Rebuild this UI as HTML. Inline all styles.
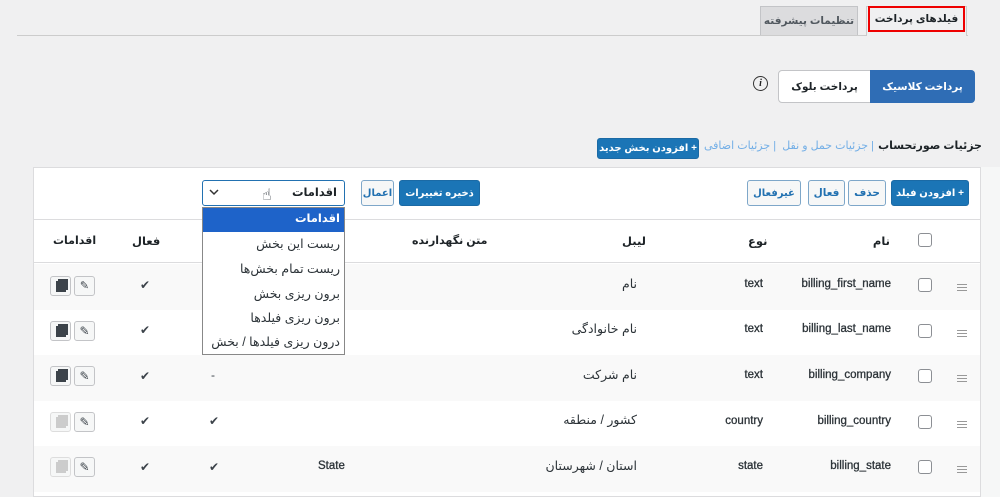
<!DOCTYPE html>
<html><head><meta charset="utf-8"><style>
*{box-sizing:border-box;margin:0;padding:0}
body{width:1000px;height:492px;overflow:hidden;background:#f0f0f1;font-family:"Liberation Sans","DejaVu Sans",sans-serif;font-size:12px;color:#3c434a;position:relative}
.a{position:absolute}
.t{position:absolute;white-space:nowrap;font-size:12px;direction:rtl}
.l{direction:ltr;font-weight:normal;font-size:11.5px;color:#2c3338;-webkit-text-stroke:0.3px #2c3338}
.btn{position:absolute;display:flex;align-items:center;justify-content:center;font-size:11px;font-weight:bold;border-radius:3px;white-space:nowrap;direction:rtl}
.bb{background:#1b75b6;color:#fff;border:1px solid #1b6aa5}
.bw{background:#f6f7f7;color:#2271b1;border:1px solid #7ea7c9}
.row{position:absolute;left:34px;width:946px;height:46px}
.cb{position:absolute;left:918px;width:14px;height:14px;border:1px solid #8c8f94;border-radius:3px;background:#fff}
.hm{position:absolute;left:957px;width:10px;height:7px;border-top:1px solid #999;border-bottom:1px solid #999}
.hm:after{content:"";position:absolute;left:0;right:0;top:2px;border-top:1px solid #999}
.ib{position:absolute;width:21px;height:20px;border:1px solid #c3c4c7;border-radius:3px;background:#f6f7f7}
.h{color:#1d2327;font-weight:bold;font-size:11.5px}
.p{color:#2c3338;font-size:12.5px}
</style></head><body>
<div class="a" style="left:17px;top:35px;width:951px;height:1px;background:#ccc"></div>
<div class="btn" style="left:760px;top:6px;width:98px;height:29px;background:#dcdcde;border:1px solid #c3c4c7;border-bottom:none;border-radius:0;color:#50575e;font-size:10.5px">تنظیمات پیشرفته</div>
<div class="a" style="left:866px;top:6px;width:101px;height:30px;background:#f0f0f1;border:1px solid #ccc;border-bottom:none"></div>
<div class="btn" style="left:868px;top:6px;width:97px;height:26px;border:2px solid #e00;border-radius:0;color:#1d2327;font-size:10.5px">فیلدهای پرداخت</div>

<div class="a" style="left:778px;top:70px;width:197px;height:33px;background:#fff;border:1px solid #c3c4c7;border-radius:4px"></div>
<div class="btn" style="left:870px;top:70px;width:105px;height:33px;background:#2f6db5;color:#fff;border-radius:0 4px 4px 0;font-size:10.5px">پرداخت کلاسیک</div>
<div class="btn" style="left:779px;top:71px;width:91px;height:31px;color:#1d2327;font-size:10.5px">پرداخت بلوک</div>
<div class="btn" style="left:753px;top:76px;width:15px;height:15px;border:1.5px solid #333;border-radius:50%;font-size:10px;font-style:italic;font-family:'Liberation Serif',serif;color:#222">i</div>

<div class="t h" style="right:18px;top:139px;font-size:11px">جزئیات صورتحساب</div>
<div class="t" style="right:126px;top:139px;color:#72aee6;font-size:11px">| جزئیات حمل و نقل &nbsp;| جزئیات اضافی</div>
<div class="btn bb" style="left:597px;top:138px;width:102px;height:21px;font-size:10px">+ افزودن بخش جدید</div>

<div class="a" style="left:33px;top:167px;width:952px;height:330px;background:#fff;border:1px solid #dcdcde"></div>
<div class="a" style="left:980px;top:167px;width:20px;height:330px;background:#f6f7f7;border-left:1px solid #dcdcde"></div>
<div class="btn bb" style="left:891px;top:180px;width:78px;height:26px;font-size:10px">+ افزودن فیلد</div>
<div class="btn bw" style="left:848px;top:180px;width:38px;height:26px;font-size:10.5px">حذف</div>
<div class="btn bw" style="left:808px;top:180px;width:37px;height:26px;font-size:10.5px">فعال</div>
<div class="btn bw" style="left:747px;top:180px;width:54px;height:26px;font-size:10px">غیرفعال</div>
<div class="btn bb" style="left:399px;top:180px;width:81px;height:26px;font-size:10px">ذخیره تغییرات</div>
<div class="btn bw" style="left:361px;top:180px;width:33px;height:26px;font-size:10px">اعمال</div>
<div class="a" style="left:202px;top:180px;width:143px;height:26px;border:1px solid #2271b1;border-radius:3px;background:#fff"></div>
<div class="t h" style="right:663px;top:185px">اقدامات</div>
<svg class="a" style="left:209px;top:189px" width="10" height="7"><path d="M1 1l4 4 4-4" stroke="#333" stroke-width="1.5" fill="none"/></svg>
<div class="t" style="left:262px;top:185px;font-size:16px;direction:ltr">☝</div>

<div class="a" style="left:34px;top:219px;width:946px;height:1px;background:#dcdcde"></div>
<div class="t h" style="right:110px;top:234px">نام</div>
<div class="cb" style="top:233px"></div>
<div class="t h" style="left:748px;top:234px">نوع</div>
<div class="t h" style="left:622px;top:234px">لیبل</div>
<div class="t h" style="left:412px;top:234px;font-size:11px">متن نگهدارنده</div>
<div class="t h" style="left:132px;top:234px">فعال</div>
<div class="t h" style="left:53px;top:234px;font-size:11px">اقدامات</div>
<div class="a" style="left:34px;top:262px;width:946px;height:1px;background:#dcdcde"></div>

<div class="row" style="top:264px;background:#f9f9f9"></div>
<div class="row" style="top:355px;background:#f9f9f9"></div>
<div class="row" style="top:446px;background:#f9f9f9"></div>

<div class="hm" style="top:284px"></div><div class="cb" style="top:278px"></div>
<div class="t l" style="right:109px;top:278px">billing_first_name</div><div class="t l" style="right:237px;top:278px">text</div><div class="t p" style="right:363px;top:276px">نام</div>
<div class="hm" style="top:330px"></div><div class="cb" style="top:324px"></div>
<div class="t l" style="right:109px;top:323px">billing_last_name</div><div class="t l" style="right:237px;top:323px">text</div><div class="t p" style="right:363px;top:321px">نام خانوادگی</div>
<div class="hm" style="top:375px"></div><div class="cb" style="top:369px"></div>
<div class="t l" style="right:109px;top:369px">billing_company</div><div class="t l" style="right:237px;top:369px">text</div><div class="t p" style="right:363px;top:367px">نام شرکت</div>
<div class="hm" style="top:421px"></div><div class="cb" style="top:415px"></div>
<div class="t l" style="right:109px;top:415px">billing_country</div><div class="t l" style="right:237px;top:415px">country</div><div class="t p" style="right:363px;top:412px">کشور / منطقه</div>
<div class="hm" style="top:466px"></div><div class="cb" style="top:460px"></div>
<div class="t l" style="right:109px;top:460px">billing_state</div><div class="t l" style="right:237px;top:460px">state</div><div class="t p" style="right:363px;top:458px">استان / شهرستان</div>
<div class="t l" style="left:318px;top:460px">State</div>

<div class="t" style="left:140px;top:278px">✔</div>
<div class="t" style="left:140px;top:323px">✔</div>
<div class="t" style="left:140px;top:369px">✔</div><div class="t" style="left:211px;top:368px">-</div>
<div class="t" style="left:140px;top:414px">✔</div><div class="t" style="left:209px;top:414px">✔</div>
<div class="t" style="left:140px;top:460px">✔</div><div class="t" style="left:209px;top:460px">✔</div>

<div class="ib" style="left:50px;top:276px"><div class="a" style="left:5px;top:4px;width:10px;height:11px;background:#3c434a;box-shadow:2px -2px 0 #3c434a"></div></div>
<div class="ib" style="left:74px;top:276px;font-size:11px;text-align:center;line-height:18px">✎</div>
<div class="ib" style="left:50px;top:321px"><div class="a" style="left:5px;top:4px;width:10px;height:11px;background:#3c434a;box-shadow:2px -2px 0 #3c434a"></div></div>
<div class="ib" style="left:74px;top:321px;text-align:center;line-height:18px">✎</div>
<div class="ib" style="left:50px;top:366px"><div class="a" style="left:5px;top:4px;width:10px;height:11px;background:#3c434a;box-shadow:2px -2px 0 #3c434a"></div></div>
<div class="ib" style="left:74px;top:366px;text-align:center;line-height:18px">✎</div>
<div class="ib" style="left:50px;top:412px;border-color:#ddd"><div class="a" style="left:5px;top:4px;width:10px;height:11px;background:#ccc;box-shadow:2px -2px 0 #ccc"></div></div>
<div class="ib" style="left:74px;top:412px;text-align:center;line-height:18px">✎</div>
<div class="ib" style="left:50px;top:457px;border-color:#ddd"><div class="a" style="left:5px;top:4px;width:10px;height:11px;background:#ccc;box-shadow:2px -2px 0 #ccc"></div></div>
<div class="ib" style="left:74px;top:457px;text-align:center;line-height:18px">✎</div>

<div class="a" style="left:202px;top:207px;width:143px;height:148px;background:#fff;border:1px solid #888"></div>
<div class="a" style="left:203px;top:208px;width:141px;height:24px;background:#1e63c9"></div>
<div class="t" style="right:660px;top:211px;color:#fff;font-weight:bold;font-size:11.5px">اقدامات</div>
<div class="t p" style="right:660px;top:236px">ریست این بخش</div>
<div class="t p" style="right:660px;top:261px">ریست تمام بخش‌ها</div>
<div class="t p" style="right:660px;top:286px">برون ریزی بخش</div>
<div class="t p" style="right:660px;top:310px">برون ریزی فیلدها</div>
<div class="t p" style="right:660px;top:334px">درون ریزی فیلدها / بخش</div>
</body></html>
